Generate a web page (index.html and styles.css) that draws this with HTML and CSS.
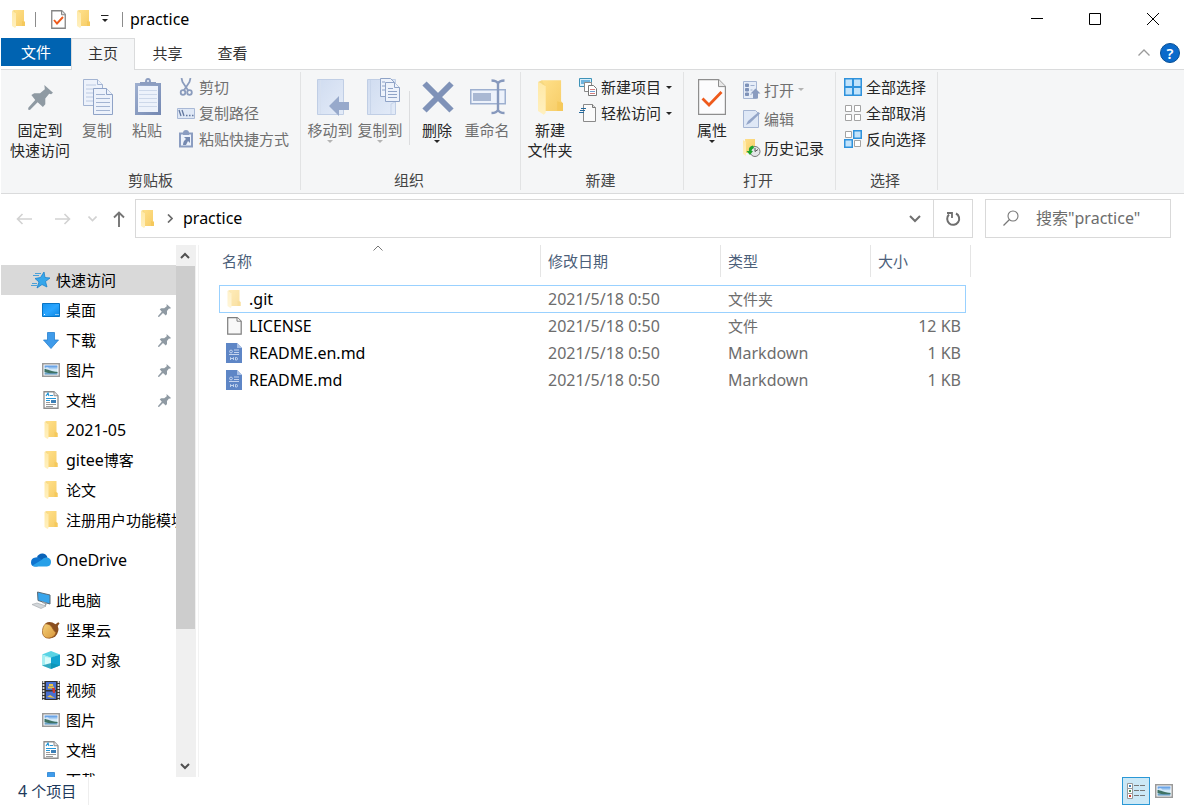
FILE: index.html
```html
<!DOCTYPE html>
<html lang="zh-CN">
<head>
<meta charset="utf-8">
<title>practice</title>
<link rel="stylesheet" href="styles.css">
</head>
<body>
<svg class="defs" width="0" height="0" aria-hidden="true">
  <defs>
    <linearGradient id="gFold" x1="0" y1="0" x2="1" y2="1"><stop offset="0" stop-color="#ffe08a"/><stop offset="1" stop-color="#f6cc66"/></linearGradient>
    <linearGradient id="gFlap" x1="0" y1="0" x2="0" y2="1"><stop offset="0" stop-color="#ffe9a6"/><stop offset="1" stop-color="#fff0c0"/></linearGradient>
    <linearGradient id="gSky" x1="0" y1="0" x2="0" y2="1"><stop offset="0" stop-color="#4a8fe0"/><stop offset=".5" stop-color="#dff1fb"/><stop offset=".7" stop-color="#b9dbe8"/><stop offset="1" stop-color="#3c7fb4"/></linearGradient>
    <linearGradient id="gDir" x1="0" y1="0" x2="1" y2="1"><stop offset="0" stop-color="#d0dcf0"/><stop offset="1" stop-color="#e3ebf8"/></linearGradient>
    <linearGradient id="gNut" x1="0" y1="0" x2="1" y2="1"><stop offset="0" stop-color="#f6d27a"/><stop offset="1" stop-color="#d8963a"/></linearGradient>
    <linearGradient id="gClip" x1="0" y1="0" x2="1" y2="1"><stop offset="0" stop-color="#9fb0d0"/><stop offset="1" stop-color="#7488b2"/></linearGradient>
    <linearGradient id="gScreen" x1="0" y1="0" x2="1" y2="1"><stop offset="0" stop-color="#1593f0"/><stop offset=".5" stop-color="#2ba6ff"/><stop offset="1" stop-color="#0b84e0"/></linearGradient>
  </defs>
  <symbol id="folder" viewBox="0 0 13 18">
    <path d="M2 0h10v11l1 1v4H3z" fill="url(#gFold)"/>
    <path d="M10 11l3 1v4h-3z" fill="#f5c95c"/>
    <path d="M0 1l4 2v14l-1 1-3-2z" fill="url(#gFlap)"/>
    <path d="M0 1L2 0l2 3z" fill="#f6d880"/>
  </symbol>
  <symbol id="pin" viewBox="0 0 26 26">
    <path d="M17 0l9 8-2 1.500-2-.5-4 5 0 6-2.500 3-5.500-5-8 8-2-.5.500-2 7-8-4-5 3-2h6l5-4z" fill="#8f9aa3"/>
  </symbol>
  <symbol id="picture" viewBox="0 0 18 14">
    <path d="M.75.75h16.500v12.500H.75z" fill="#fff" stroke="#9a9a9a" stroke-width="1.500"/>
    <path d="M2.500 2.500h13v9h-13z" fill="url(#gSky)"/>
    <path d="M2.500 6c3 0 6 2.500 13 3v1c-5 .5-9 .5-13-1z" fill="#3f7264"/>
    <path d="M3 5.500c1-1.500 3-1.500 4.500 0z" fill="#fff"/>
  </symbol>
  <symbol id="document" viewBox="0 0 16 18">
    <path d="M1 .75h10l4 4v12.500H1z" fill="#fff" stroke="#8d8d8d" stroke-width="1.300"/>
    <path d="M11 .75v4h4" fill="#e5e5e5" stroke="#8d8d8d"/>
    <path d="M3 5l2-3 1 3M7 4.500h3M3 7.500h10M3 9.500h4" stroke="#2396d8" stroke-width="1.200" fill="none"/>
    <path d="M8 9h5v3H8z" fill="#3d80b8"/>
    <path d="M3 11.500h4M3 13.500h10M3 15.500h7" stroke="#9a9a9a"/>
  </symbol>
  <symbol id="download" viewBox="0 0 16 17">
    <path d="M4.500.5h7V8h4L8 16.500.5 8h4z" fill="#3f9bea" stroke="#2780cf" stroke-width=".8"/>
  </symbol>
  <symbol id="markdown" viewBox="0 0 16 20">
    <path d="M0 0h11l5 5v15H0z" fill="#5e86c6"/><path d="M11 0v5h5z" fill="#a8c0e6"/>
    <path d="M8 7h5M8 9.500h5M3 11.500h10" stroke="#c3d3ee" stroke-width="1"/>
    <circle cx="5" cy="8.500" r="1.400" fill="none" stroke="#c3d3ee"/>
    <path d="M4.500 17v-2.500l1.500 1.500 1.500-1.500V17M9.500 14.500V17h1q1 0 1-1.250t-1-1.250z" stroke="#cbdaf2" fill="none" stroke-width=".9"/>
  </symbol>
  <symbol id="checkdoc" viewBox="0 0 28 36">
    <path d="M.6.6h20l6.800 7v27.800H.6z" fill="#fcfcfd" stroke="#8e8e8e" stroke-width="1.200"/>
    <path d="M20.500.6v7h7" fill="#e8e8e8" stroke="#8e8e8e"/>
    <path d="M4.500 19.500l6.500 6.500L23.500 13" fill="none" stroke="#ee5a1c" stroke-width="2.800"/>
  </symbol>
  <symbol id="caret" viewBox="0 0 6 3"><path d="M0 0h6L3 3z" fill="currentColor"/></symbol>
</svg>

<header class="titlebar">
  <svg class="folder" aria-hidden="true"><use href="#folder"/></svg>
  <span class="rule rule-a"></span>
  <button class="quick" aria-label="属性"><svg width="15" height="19" viewBox="0 0 15 19"><path d="M.75.75h10l3.500 3.500v14H.75z" fill="#fff" stroke="#858585" stroke-width="1.300"/><path d="M10.500.75v4h4" fill="#ddd" stroke="#858585"/><path d="M3 10l3 3.500 6-6.500" fill="none" stroke="#ee5a1c" stroke-width="1.900"/></svg></button>
  <button class="quick" aria-label="新建文件夹"><svg class="folder"><use href="#folder"/></svg></button>
  <button class="quick" aria-label="自定义快速访问工具栏"><svg width="8" height="8" viewBox="0 0 8 8"><path d="M0 .5h7.500" stroke="#222"/><path d="M1 4h6L4 7z" fill="#222"/></svg></button>
  <span class="rule rule-b"></span>
  <h1 class="title">practice</h1>
  <div class="window-buttons">
    <button aria-label="最小化"><svg width="12" height="12"><path d="M0 5.500h12" stroke="#000"/></svg></button>
    <button aria-label="最大化"><svg width="12" height="12"><path d="M.5.5h11v11H.5z" stroke="#000" fill="none"/></svg></button>
    <button aria-label="关闭"><svg width="12" height="12"><path d="M0 0l12 12M12 0L0 12" stroke="#000"/></svg></button>
  </div>
</header>

<nav class="tabs">
  <button class="tab tab-file">文件</button>
  <button class="tab tab-active">主页</button>
  <button class="tab">共享</button>
  <button class="tab">查看</button>
  <div class="tabs-end">
    <button aria-label="最小化功能区"><svg width="12" height="7"><path d="M.5 6.500L6 1l5.500 5.500" fill="none" stroke="#9a9a9a" stroke-width="1.300"/></svg></button>
    <button class="help" aria-label="帮助">?</button>
  </div>
</nav>

<section class="ribbon">
  <div class="group group-clipboard">
    <div class="group-body">
      <button class="big big-wide"><span class="big-icon"><svg width="25" height="25"><use href="#pin"/></svg></span>固定到<br>快速访问</button>
      <button class="big off"><span class="big-icon"><svg width="34" height="38" viewBox="-2 0 34 38">
        <g fill="#edf2fb" stroke="#a3b4d2"><path d="M1.500 1.500h14l5 5v21h-19z"/><path d="M15.500 1.500v5h5"/><path d="M4 7h10M4 11h13M4 15h13M4 19h13M4 23h13" stroke="#bccae2"/></g>
        <g fill="#edf2fb" stroke="#8fa3c7"><path d="M11.500 10.500h13l6 6v20h-19z"/><path d="M24.500 10.500v6h6"/><path d="M14 16.500h9M14 20.500h14M14 24.500h14M14 28.500h14M14 32.500h14" stroke="#a3b4d2"/></g></svg></span>复制</button>
      <button class="big off"><span class="big-icon"><svg width="30" height="38" viewBox="-2 0 30 38"><path d="M1 5h26v32H1z" fill="url(#gClip)"/><path d="M4 8h20v26H4z" fill="#edf2fb"/><path d="M5 12.500h18M5 16.500h18M5 20.500h18M5 24.500h18M5 28.500h18" stroke="#cdd8ea"/><path d="M6 7V4h5q0-4 3-4t3 4h5v3z" fill="#8c9dc0"/><circle cx="14" cy="3" r="1" fill="#edf2fb"/></svg></span>粘贴</button>
      <div class="stack stack-clip">
        <button class="small off"><svg width="18" height="18" viewBox="0 0 18 18" fill="none" stroke="#8b9cbd"><path d="M4.500 0l1 4 6 9M13.500 0l-1 4-6 9" stroke-width="1.800"/><circle cx="6" cy="14.500" r="2.300" stroke-width="1.800"/><circle cx="12.500" cy="14.500" r="2.300" stroke-width="1.800"/></svg>剪切</button>
        <button class="small off"><svg width="18" height="18" viewBox="0 0 18 18"><path d="M.5 4.500h17v10H.5z" fill="#dfe8f6" stroke="#a9b9d6"/><path d="M2 6l2 6M5 6l2 6M9 11.500h1.500M12 11.500h1.500M15 11.500h1.500" stroke="#62779f" stroke-width="1.300"/></svg>复制路径</button>
        <button class="small off"><svg width="18" height="18" viewBox="0 0 18 18"><path d="M3 3.500h12v13H3z" fill="#edf2fb" stroke="#8b9dc1" stroke-width="2"/><path d="M6 3q0-3 3-3t3 3v2H6z" fill="#8b9dc1"/><path d="M7 7h6v6l-2-2-2 4H6q0-4 3-6z" fill="#7589b0"/></svg>粘贴快捷方式</button>
      </div>
    </div>
    <h2 class="group-name">剪贴板</h2>
  </div>

  <div class="group group-organize">
    <div class="group-body">
      <button class="big off"><span class="big-icon"><svg width="40" height="38" viewBox="-6 0 40 38"><path d="M1.500 1.500h26v35h-26z" fill="url(#gDir)" stroke="#c0cee5"/><path d="M4.500 2v34" stroke="#d6e0f0"/><path d="M13 28l10-10v6h10v8H23v6z" fill="#97a9cb"/></svg></span>移动到<svg class="caret"><use href="#caret"/></svg></button>
      <button class="big off"><span class="big-icon"><svg width="40" height="38" viewBox="-6 0 40 38"><path d="M1.500 1.500h28v35h-28z" fill="url(#gDir)" stroke="#c0cee5"/><path d="M4.500 2v34M25 36V26l4-2" stroke="#c8d5ea" fill="none"/><g fill="#edf2fb" stroke="#8fa3c7"><path d="M14.500.5h10l4 4v14h-14z"/><path d="M19.500 4.500h9l5 5v14h-14z"/><path d="M28.500 4.500v5h5M16 4h3M16 8h3M16 12h3M22 10.500h5M22 13.500h9M22 16.500h9M22 19.500h9"/></g></svg></span>复制到<svg class="caret"><use href="#caret"/></svg></button>
      <span class="divider"></span>
      <button class="big"><span class="big-icon"><svg width="34" height="32" viewBox="-2 0 34 32"><path d="M2.500 2.500l27 27M29.500 2.500l-27 27" stroke="#7f92b8" stroke-width="6"/></svg></span>删除<svg class="caret"><use href="#caret"/></svg></button>
      <button class="big off"><span class="big-icon"><svg width="38" height="36" viewBox="-2 0 38 36"><path d="M.75 10.750h34.500v14H.75z" fill="#edf2fb" stroke="#9eb0d0" stroke-width="1.500"/><path d="M3 14h18v8H3z" fill="#a9b8d3"/><path d="M21.500 1.500q5 0 6.500 3 1.500-3 6.500-3M21.500 34q5 0 6.500-3 1.500 3 6.500 3M28 4v27" fill="none" stroke="#8799bd" stroke-width="2.400"/></svg></span>重命名</button>
    </div>
    <h2 class="group-name">组织</h2>
  </div>

  <div class="group group-new">
    <div class="group-body">
      <button class="big"><span class="big-icon"><svg width="25" height="35"><use href="#folder"/></svg></span>新建<br>文件夹</button>
      <div class="stack">
        <button class="small"><svg width="18" height="18" viewBox="0 0 18 18"><path d="M.5.5h12v8H.5z" fill="#d9eefa" stroke="#3f93b8"/><path d="M2 2h9v4H2z" fill="#6fb5de"/><path d="M5.500 4.500h7v9h-7z" fill="#fff" stroke="#8a8a8a"/><path d="M9.500 7.500h5l3 3v7h-8z" fill="#fff" stroke="#777"/><path d="M11 11.500h5M11 15.500h5" stroke="#d67f7f"/><path d="M11 13.500h5" stroke="#6f9fd0"/></svg>新建项目<svg class="caret"><use href="#caret"/></svg></button>
        <button class="small"><svg width="18" height="18" viewBox="0 0 18 18"><path d="M4.500.5h9l3 3v14h-12z" fill="#fafafa" stroke="#8a8a8a"/><path d="M13.500.5v3h3" stroke="#777" fill="#ddd"/><path d="M2 4.500h5M1 6.500h5M0 8.500h5" stroke="#23689c" stroke-width="1.200"/></svg>轻松访问<svg class="caret"><use href="#caret"/></svg></button>
      </div>
    </div>
    <h2 class="group-name">新建</h2>
  </div>

  <div class="group group-open">
    <div class="group-body">
      <button class="big"><span class="big-icon"><svg width="28" height="36"><use href="#checkdoc"/></svg></span>属性<svg class="caret"><use href="#caret"/></svg></button>
      <div class="stack stack-open">
        <button class="small off"><svg width="18" height="18" viewBox="0 0 18 18"><path d="M.5.5h13v17H.5z" fill="#e6edf8" stroke="#a6b6d3"/><path d="M2.500 3h3v2.500h-3zM2.500 7.500h3V10h-3zM2.500 12h3v2.500h-3z" fill="#7e92b8" stroke="#7e92b8"/><path d="M7.500 4.500h4M7.500 9h2M7.500 13.500h1" stroke="#9fb0cf"/><path d="M12.500 7.500l5 5h-2.500v5h-5v-5H7.500z" fill="#8a9cc0"/></svg>打开<svg class="caret"><use href="#caret"/></svg></button>
        <button class="small off"><svg width="18" height="18" viewBox="0 0 18 18"><path d="M.5.5h12l3 3v14H.5z" fill="#dfe8f6" stroke="#a6b6d3"/><path d="M3 15l2-4L15.500 2l1.500 1.500L7 13z" fill="#93a5c8"/></svg>编辑</button>
        <button class="small"><svg width="18" height="18" viewBox="0 0 18 18"><path d="M2 0h10v14H3z" fill="url(#gFold)"/><path d="M0 1l3 2v14l-3-2z" fill="url(#gFlap)"/><circle cx="12" cy="12.500" r="5" fill="#e3e6e8" stroke="#777"/><path d="M12 9v3.500l3-2" fill="none" stroke="#555"/><path d="M10 6.500q-5 1-4 5.500H3.500l3.500 4 3-4H8.500q0-2 2.500-3z" fill="#20a52c"/></svg>历史记录</button>
      </div>
    </div>
    <h2 class="group-name">打开</h2>
  </div>

  <div class="group group-select">
    <div class="group-body">
      <div class="stack">
        <button class="small"><svg width="18" height="18" viewBox="0 0 18 18"><path d="M.75.75h16.500v16.500H.75z" fill="#c2e3fb" stroke="#2f92dc" stroke-width="1.500"/><path d="M9 0v18M0 9h18" stroke="#2f92dc" stroke-width="2"/></svg>全部选择</button>
        <button class="small"><svg width="18" height="18" viewBox="0 0 18 18"><path d="M1.500 1.500h6v6h-6zM10.500 1.500h6v6h-6zM1.500 10.500h6v6h-6zM10.500 10.500h6v6h-6z" fill="#fff" stroke="#a3a3a3"/></svg>全部取消</button>
        <button class="small"><svg width="18" height="18" viewBox="0 0 18 18"><path d="M1.500 1.500h6v6h-6zM10.500 10.500h6v6h-6z" fill="#fff" stroke="#a3a3a3"/><path d="M9.750.75h7.500v7.500h-7.500zM.75 9.750h7.500v7.500H.75z" fill="#c2e3fb" stroke="#2f92dc" stroke-width="1.500"/></svg>反向选择</button>
      </div>
    </div>
    <h2 class="group-name">选择</h2>
  </div>
</section>

<div class="locator">
  <button class="step" aria-label="后退"><svg width="16" height="12"><path d="M16 6H1.500M6.500 1l-5 5 5 5" fill="none" stroke="#d2d2d2" stroke-width="1.600"/></svg></button>
  <button class="step" aria-label="前进"><svg width="16" height="12"><path d="M0 6h14.500M9.500 1l5 5-5 5" fill="none" stroke="#d2d2d2" stroke-width="1.600"/></svg></button>
  <button class="step step-recent" aria-label="最近浏览的位置"><svg width="9" height="6"><path d="M.5.5l4 4 4-4" fill="none" stroke="#d2d2d2" stroke-width="1.600"/></svg></button>
  <button class="step step-up" aria-label="上移"><svg width="12" height="16"><path d="M6 16V1.500M1 6.500l5-5 5 5" fill="none" stroke="#757575" stroke-width="1.900"/></svg></button>
  <div class="address">
    <svg class="folder" aria-hidden="true"><use href="#folder"/></svg>
    <svg class="crumb-arrow" width="6" height="9" aria-hidden="true"><path d="M1 .5l4 4-4 4" fill="none" stroke="#6b6b6b" stroke-width="1.700"/></svg>
    <a class="crumb" href="#practice">practice</a>
    <button class="address-drop" aria-label="以前的位置"><svg width="12" height="8"><path d="M1 1l5 5 5-5" fill="none" stroke="#707070" stroke-width="2"/></svg></button>
    <button class="refresh" aria-label="刷新"><svg width="16" height="16" viewBox="0 0 16 16"><path d="M11 2.500A6 6 0 1 1 4 3.500" fill="none" stroke="#6e6e6e" stroke-width="2"/><path d="M2 2h5v5" fill="none" stroke="#6e6e6e" stroke-width="1.800"/></svg></button>
  </div>
  <label class="search">
    <svg width="16" height="16" aria-hidden="true"><circle cx="10" cy="6" r="5" fill="none" stroke="#777" stroke-width="1.100"/><path d="M6.500 9.500L.5 15.500" stroke="#777" stroke-width="1.200"/></svg>
    <input type="search" placeholder="搜索&quot;practice&quot;" aria-label="搜索practice">
  </label>
</div>

<div class="content">
  <nav class="tree">
    <ul>
      <li><a class="root current" href="#quick"><svg width="20" height="18" viewBox="0 0 20 18"><path d="M2 4.500h6M4 2.500h6M1 12.500h5M0 14.500h6" stroke="#4aa0d8"/><path d="M13 1l1 5.500 5 .5-4.500 3.500 1.500 5.500-5-2.500-5 3.500 2-6L4 7.500l5.500-1z" fill="#36a6ea" stroke="#1c82cb" stroke-width=".8"/></svg>快速访问</a></li>
      <li><a href="#desktop"><svg width="18" height="18" viewBox="0 0 18 18"><path d="M.5 2.500h17v13H.5z" fill="url(#gScreen)" stroke="#0874c4"/><path d="M2 13.500h1M13.500 13.500h1M15.500 13.500h1" stroke="#fff"/></svg><span class="name">桌面</span><svg class="pin"><use href="#pin"/></svg></a></li>
      <li><a href="#downloads"><svg width="18" height="17"><use href="#download"/></svg><span class="name">下载</span><svg class="pin"><use href="#pin"/></svg></a></li>
      <li><a href="#pictures"><svg width="18" height="14"><use href="#picture"/></svg><span class="name">图片</span><svg class="pin"><use href="#pin"/></svg></a></li>
      <li><a href="#documents"><svg width="18" height="18"><use href="#document"/></svg><span class="name">文档</span><svg class="pin"><use href="#pin"/></svg></a></li>
      <li><a href="#f1"><svg width="18" height="18"><use href="#folder"/></svg><span class="name latin">2021-05</span></a></li>
      <li><a href="#f2"><svg width="18" height="18"><use href="#folder"/></svg><span class="name"><span class="latin">gitee</span>博客</span></a></li>
      <li><a href="#f3"><svg width="18" height="18"><use href="#folder"/></svg><span class="name">论文</span></a></li>
      <li><a href="#f4"><svg width="18" height="18"><use href="#folder"/></svg><span class="name">注册用户功能模块</span></a></li>
    </ul>
    <ul>
      <li><a class="root latin" href="#onedrive"><svg width="20" height="14" viewBox="0 0 20 14"><path d="M6 4q2-4 6-3.500 3.500.5 4.500 4L10 9z" fill="#0a63b8"/><path d="M0 9.500Q0 5 4.500 4.500q3-1 5.500 1.500l5 4-9 3.500H4Q0 13.500 0 9.500z" fill="#0f74cf"/><path d="M10.500 7q2-3 5.500-2.500 4 .5 4 4.500t-4 4.500H4q-1.500 0-2.500-1z" fill="#28a0e8"/></svg>OneDrive</a></li>
    </ul>
    <ul>
      <li><a class="root" href="#pc"><svg width="20" height="18" viewBox="0 0 20 18"><path d="M6.500 1l12.500 3v9L7 9.500z" fill="#38a5ec" stroke="#5a6b78"/><path d="M11 11l4 1.500-1 3" stroke="#9aa2a8" stroke-width="1.500" fill="none"/><path d="M1 13.500l5-1.500 9 3-5 2.500z" fill="#d3d7da" stroke="#a9aeb2" stroke-width=".7"/></svg>此电脑</a></li>
      <li><a href="#nut"><svg width="20" height="20" viewBox="0 0 20 20"><path d="M4 2.500Q9-.5 15 3.500l3-2 1.500 1-2 3q2.500 6-3 12-3 2-7 2z" fill="#8a4f20"/><path d="M4 3Q0 7 .5 13.500 2 19.500 8 19q6-1 7.500-6Q13 11 11 7T4 3z" fill="url(#gNut)" stroke="#9a5a22" stroke-width=".8"/></svg><span class="name">坚果云</span></a></li>
      <li><a href="#objects"><svg width="18" height="18" viewBox="0 0 18 18"><path d="M9 0l9 3.500L9 7 0 3.500z" fill="#59d3e4"/><path d="M0 3.500l9 3V18l-9-3.500z" fill="#a3eef2"/><path d="M3 6l6 1v6l-6 1z" fill="#dbfbfa"/><path d="M9 6.500l9-3v11L9 18z" fill="#12a4d0"/><path d="M0 14.500L9 12l9 2.500L9 18z" fill="#0b91b0" opacity=".75"/></svg><span class="name"><span class="latin">3D </span>对象</span></a></li>
      <li><a href="#videos"><svg width="18" height="19" viewBox="0 0 18 19"><path d="M0 0h18v19H0z" fill="#343434"/><path d="M1.500 0v19M16.500 0v19" stroke="#ddd" stroke-width="1.800" stroke-dasharray="2 1"/><path d="M4 1h10v8H4zM4 10.500h10V18H4z" fill="#496fd0"/><path d="M7 3h4v2H7zM6 5.500h6v2H6zM5 16l3-2 5 3z" fill="#eac343"/><path d="M10 7h3v5h-2z" fill="#cc3832"/></svg><span class="name">视频</span></a></li>
      <li><a href="#pictures2"><svg width="18" height="14"><use href="#picture"/></svg><span class="name">图片</span></a></li>
      <li><a href="#documents2"><svg width="18" height="18"><use href="#document"/></svg><span class="name">文档</span></a></li>
      <li><a href="#downloads2"><svg width="18" height="17"><use href="#download"/></svg><span class="name">下载</span></a></li>
    </ul>
  </nav>
  <div class="scrollbar">
    <button aria-label="向上滚动"><svg width="10" height="7"><path d="M1 6l4-4 4 4" fill="none" stroke="#505050" stroke-width="2"/></svg></button>
    <div class="track"><div class="thumb"></div></div>
    <button aria-label="向下滚动"><svg width="10" height="7"><path d="M1 1l4 4 4-4" fill="none" stroke="#505050" stroke-width="2"/></svg></button>
  </div>
  <main class="files">
    <table>
      <colgroup><col class="col-name"><col class="col-date"><col class="col-type"><col class="col-size"></colgroup>
      <thead>
        <tr><th><div class="head head-name">名称<svg class="sort" width="10" height="6" aria-hidden="true"><path d="M.5 5.500L5 1l4.500 4.500" fill="none" stroke="#777"/></svg></div></th><th><div class="head">修改日期</div></th><th><div class="head">类型</div></th><th><div class="head">大小</div></th></tr>
      </thead>
      <tbody>
        <tr class="focused"><td><a class="latin" href="#git"><svg class="faded" width="16" height="18"><use href="#folder"/></svg>.git</a></td><td class="latin">2021/5/18 0:50</td><td>文件夹</td><td></td></tr>
        <tr><td><a class="latin" href="#license"><svg width="16" height="18" viewBox="0 0 16 18"><path d="M1.700.7h9.500l4 3.500v13H1.700z" fill="#f8f8f8" stroke="#7d7d7d" stroke-width="1.200"/><path d="M11 .7v3.500h4" fill="#fff" stroke="#7d7d7d"/></svg>LICENSE</a></td><td class="latin">2021/5/18 0:50</td><td>文件</td><td class="latin size">12 KB</td></tr>
        <tr><td><a class="latin" href="#readme-en"><svg width="16" height="20"><use href="#markdown"/></svg>README.en.md</a></td><td class="latin">2021/5/18 0:50</td><td class="latin">Markdown</td><td class="latin size">1 KB</td></tr>
        <tr><td><a class="latin" href="#readme"><svg width="16" height="20"><use href="#markdown"/></svg>README.md</a></td><td class="latin">2021/5/18 0:50</td><td class="latin">Markdown</td><td class="latin size">1 KB</td></tr>
      </tbody>
    </table>
  </main>
</div>

<footer class="status">
  <span class="count"><span class="latin">4 </span>个项目</span>
  <div class="views">
    <button class="view view-on" aria-label="详细信息"><svg width="18" height="16" viewBox="0 0 18 16"><path d="M.5.500h5v5h-5zM.5 5.500h5v5h-5zM.5 10.500h5v5h-5z" fill="#fff" stroke="#999"/><path d="M2 2h2v2H2z" fill="#3b7fb5"/><path d="M2 7h2v2H2z" fill="#4e8f58"/><path d="M2 12h2v2H2z" fill="#d03c2e"/><path d="M7 2.500h5M13 2.500h5M7 7.500h5M13 7.500h5M7 12.500h5M13 12.500h5" stroke="#777"/></svg></button>
    <button class="view" aria-label="大缩略图"><svg width="18" height="14"><use href="#picture"/></svg></button>
  </div>
</footer>
</body>
</html>
```
FILE: styles.css
```css
* { box-sizing: border-box; }

body {
  margin: 0;
  padding-left: 1px;
  height: 100vh;
  display: flex;
  flex-direction: column;
  overflow: hidden;
  background: #fff;
  color: #000;
  font: 15px/20px "Noto Sans", "Noto Sans CJK SC", sans-serif;
}

button {
  display: flex;
  align-items: center;
  justify-content: center;
  margin: 0;
  padding: 0;
  border: 0;
  background: none;
  color: inherit;
  font: inherit;
  white-space: nowrap;
}

svg { display: block; flex: none; }
a { color: inherit; text-decoration: none; }
h1, h2 { margin: 0; font: inherit; }
ul { margin: 0; padding: 0; list-style: none; }

.defs { position: absolute; }
.latin { font-size: 16px; }
.folder { width: 13px; height: 18px; }
.caret { width: 6px; height: 3px; }

/* title bar */
.titlebar {
  flex: none;
  display: flex;
  align-items: center;
  height: 38px;
  padding: 0 2px 0 11px;
}
.rule { width: 1px; height: 15px; background: #8c8c8c; }
.rule-a { margin: 0 15px 0 10px; }
.rule-b { margin: 0 7px 0 13px; }
.quick + .quick { margin-left: 11px; }
.title { font-size: 16px; }
.window-buttons { display: flex; margin-left: auto; }
.window-buttons button { width: 58px; height: 38px; }

/* tabs */
.tabs {
  flex: none;
  display: flex;
  height: 32px;
  border-bottom: 1px solid #dadbdc;
}
.tab { width: 65px; height: 31px; padding-bottom: 2px; color: #333; }
.tab-file { width: 70px; height: 28px; padding-bottom: 0; background: #0063b1; color: #fff; }
.tab-active {
  width: 64px;
  height: 32px;
  padding-bottom: 3px;
  border: 1px solid #dadbdc;
  border-bottom: 0;
  background: #f5f6f7;
}
.tabs-end { display: flex; align-items: center; gap: 10px; margin-left: auto; padding: 0 4px 2px 0; }
.help {
  width: 20px;
  height: 20px;
  border: 1px solid #084f94;
  border-radius: 50%;
  background: #0a6acb;
  color: #fff;
  font-weight: 600;
}

/* ribbon */
.ribbon {
  flex: none;
  display: flex;
  padding: 2px 0 3px;
  border-bottom: 1px solid #dadbdc;
  background: #f5f6f7;
}
.group {
  display: flex;
  flex-direction: column;
  border-right: 1px solid #e2e3e4;
  color: #262626;
}
.group-clipboard { width: 300px; }
.group-organize { width: 220px; }
.group-new { width: 163px; }
.group-open { width: 152px; }
.group-select { width: 102px; }
.group-body { display: flex; height: 98px; padding-left: 4px; }
.group-clipboard .group-body { padding-left: 9px; }
.group-open .group-body { padding-left: 3px; }
.group-select .group-body { padding-left: 8px; }
.group-name { padding-right: 3px; color: #444; text-align: center; }
.group-clipboard .group-name { padding-right: 0; }

.big {
  flex-direction: column;
  justify-content: flex-start;
  width: 50px;
  padding-top: 5px;
}
.big-wide { width: 60px; margin-right: 2px; }
.big-icon { display: flex; align-items: center; justify-content: center; height: 40px; margin-bottom: 3px; }
.off { color: #707070; }
.off .caret { color: #b4b4b4; }
.divider { width: 1px; height: 54px; margin: 19px 2px 0 4px; background: #dcdddf; }

.stack { padding: 2px 0 0 4px; }
.group-select .stack { padding-left: 0; }
.stack-clip { padding-left: 5px; }
.stack-open { padding: 3px 0 0 6px; }
.small { height: 26px; gap: 4px; }
.stack-open .small { height: 29px; gap: 3px; }
.small .caret { margin-left: 1px; }

/* address row */
.locator { flex: none; display: flex; padding: 5px 13px 7px 3px; }
.step { width: 39px; }
.step-recent { width: 21px; }
.step-up { width: 32px; }
.address {
  flex: 1;
  display: flex;
  align-items: center;
  height: 39px;
  padding-left: 5px;
  border: 1px solid #d9d9d9;
}
.crumb-arrow { margin: 0 10px 0 13px; }
.crumb { padding-bottom: 2px; font-size: 16px; }
.address-drop { width: 37px; height: 37px; margin-left: auto; }
.refresh { width: 39px; height: 37px; border-left: 1px solid #d9d9d9; }
.search {
  display: flex;
  align-items: center;
  gap: 17px;
  width: 186px;
  margin-left: 12px;
  padding: 0 0 2px 17px;
  border: 1px solid #d9d9d9;
}
.search input {
  flex: 1;
  min-width: 0;
  padding: 0;
  border: 0;
  outline: 0;
  background: none;
  font: 16px/20px "Noto Sans", "Noto Sans CJK SC", sans-serif;
}
.search input::placeholder { color: #6d6d6d; opacity: 1; }

/* navigation tree */
.content { flex: 1; display: flex; min-height: 0; }
.tree { flex: none; width: 175px; padding-top: 20px; overflow: hidden; }
.tree ul + ul { margin-top: 10px; }
.tree a {
  display: flex;
  align-items: center;
  gap: 6px;
  height: 30px;
  padding: 0 5px 0 41px;
  white-space: nowrap;
}
.tree a > svg:first-child { width: 18px; }
.tree a.root { gap: 5px; padding-left: 30px; }
.tree a.root > svg:first-child { width: 20px; }
.tree .current { background: #d9d9d9; }
.name { flex: 1; }
.tree .pin { width: 13px; height: 13px; }

.scrollbar {
  flex: none;
  display: flex;
  flex-direction: column;
  width: 20px;
  background: #f0f0f0;
}
.scrollbar button { width: 18px; height: 21px; }
.track { flex: 1; }
.thumb { width: 19px; height: 74%; background: #cdcdcd; }

/* file list */
.files { flex: 1; margin-left: 2px; padding-left: 20px; border-left: 1px solid #f2f2f2; }
.files table { width: 752px; table-layout: fixed; border-collapse: collapse; }
.col-name { width: 322px; }
.col-date { width: 180px; }
.col-type { width: 150px; }
.col-size { width: 100px; }
.files th { height: 41px; padding: 0; vertical-align: top; color: #4c607a; font-weight: 400; text-align: left; }
.head { height: 32px; padding-left: 7px; border-right: 1px solid #e5e5e5; line-height: 32px; }
.head-name { display: flex; padding: 0 36px 0 3px; }
.sort { margin: 0 auto; }
.files td { height: 27px; padding: 0 10px 2px 7px; color: #6d6d6d; white-space: nowrap; }
.files td a { display: flex; align-items: center; gap: 7px; color: #000; }
.files .size { text-align: right; }
.faded { opacity: .6; }
.focused { position: relative; }
.focused::after {
  content: "";
  position: absolute;
  inset: -1px 5px 0 0;
  border: 1px solid #99d1ff;
  pointer-events: none;
}

/* status bar */
.status { flex: none; display: flex; align-items: flex-start; height: 30px; padding: 0 6px 0 17px; color: #1e395b; }
.count { padding-right: 12px; border-right: 1px solid #eee; line-height: 28px; }
.views { display: flex; margin-left: auto; }
.view { width: 28px; height: 28px; }
.view-on { border: 1px solid #2a98d6; background: #cbe8f6; }
```
